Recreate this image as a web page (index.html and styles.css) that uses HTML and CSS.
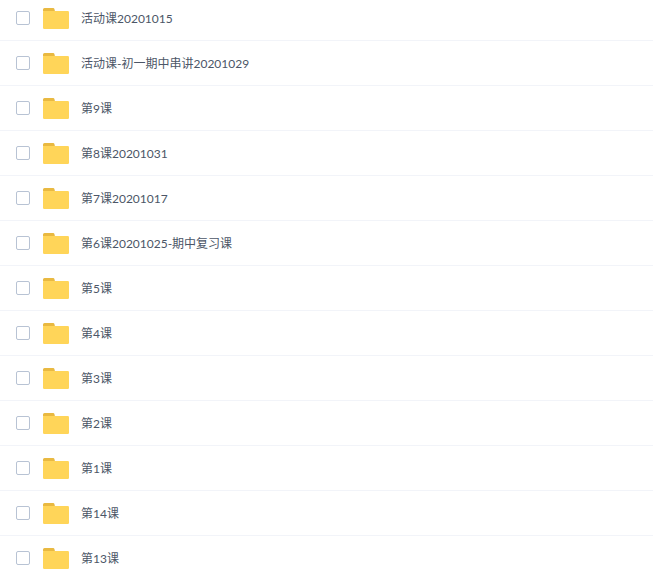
FILE: index.html
```html
<!DOCTYPE html>
<html lang="zh-CN">
<head>
  <meta charset="UTF-8">
  <meta name="viewport" content="width=device-width, initial-scale=1.0">
  <title>文件列表</title>
  <link rel="stylesheet" href="styles.css">
</head>
<body>
  <svg class="defs" width="0" height="0">
    <symbol id="folder" viewBox="0 0 26 21">
      <path d="M0 1.5A1.5 1.5 0 0 1 1.500 0h8.500a1.500 1.500 0 0 1 1.500 1.200L12 3.500H0z" fill="#e9b941"/>
      <rect x="0" y="3" width="26" height="18" rx="1.200" fill="#ffd559"/>
    </symbol>
  </svg>
  <ul class="file-list">
    <li class="row"><span class="check"></span><svg class="folder"><use href="#folder"/></svg><span class="name">活动课20201015</span></li>
    <li class="row"><span class="check"></span><svg class="folder"><use href="#folder"/></svg><span class="name">活动课-初一期中串讲20201029</span></li>
    <li class="row"><span class="check"></span><svg class="folder"><use href="#folder"/></svg><span class="name">第9课</span></li>
    <li class="row"><span class="check"></span><svg class="folder"><use href="#folder"/></svg><span class="name">第8课20201031</span></li>
    <li class="row"><span class="check"></span><svg class="folder"><use href="#folder"/></svg><span class="name">第7课20201017</span></li>
    <li class="row"><span class="check"></span><svg class="folder"><use href="#folder"/></svg><span class="name">第6课20201025-期中复习课</span></li>
    <li class="row"><span class="check"></span><svg class="folder"><use href="#folder"/></svg><span class="name">第5课</span></li>
    <li class="row"><span class="check"></span><svg class="folder"><use href="#folder"/></svg><span class="name">第4课</span></li>
    <li class="row"><span class="check"></span><svg class="folder"><use href="#folder"/></svg><span class="name">第3课</span></li>
    <li class="row"><span class="check"></span><svg class="folder"><use href="#folder"/></svg><span class="name">第2课</span></li>
    <li class="row"><span class="check"></span><svg class="folder"><use href="#folder"/></svg><span class="name">第1课</span></li>
    <li class="row"><span class="check"></span><svg class="folder"><use href="#folder"/></svg><span class="name">第14课</span></li>
    <li class="row"><span class="check"></span><svg class="folder"><use href="#folder"/></svg><span class="name">第13课</span></li>
  </ul>
</body>
</html>
```

FILE: styles.css
```css
html, body {
  height: 100%;
}

body {
  margin: 0;
  background: #fff;
  overflow: hidden;
  font-family: Lato, "Noto Sans CJK SC", sans-serif;
  font-size: 12px;
  color: #4c5667;
}

.defs {
  display: block;
}

.file-list {
  list-style: none;
  margin: -4px 0 0;
  padding: 0;
}

.row {
  display: flex;
  align-items: center;
  height: 44px;
  padding-left: 16px;
  border-bottom: 1px solid #f2f4f9;
}

.check {
  box-sizing: border-box;
  width: 14px;
  height: 14px;
  border: 1px solid #b8c3d4;
  border-radius: 2px;
  background: #fff;
}

.folder {
  width: 26px;
  height: 21px;
  margin-left: 13px;
  margin-top: 1px;
}

.name {
  margin-left: 12px;
  padding-top: 2px;
  line-height: 16px;
}
```
